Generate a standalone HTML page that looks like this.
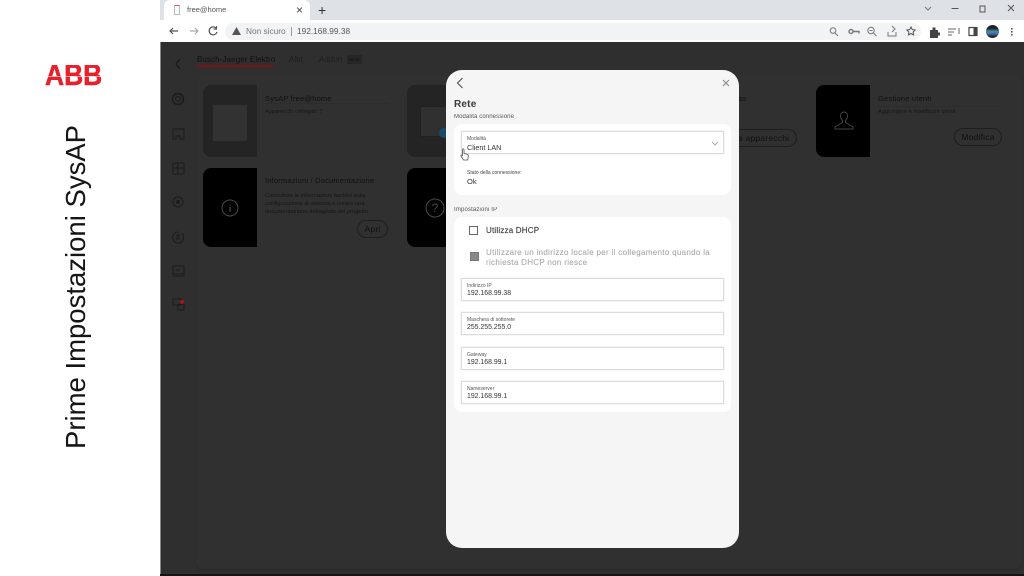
<!DOCTYPE html>
<html><head><meta charset="utf-8"><style>
html,body{margin:0;padding:0;width:1024px;height:576px;overflow:hidden;background:#fff;font-family:"Liberation Sans",sans-serif}
div,span{position:absolute;white-space:nowrap}
svg{position:absolute;overflow:visible}
.b{filter:blur(.35px)}
.img{border-radius:8px 0 0 8px;background:#000;width:54px}
.btn{border:1px solid #1e1e1e;border-radius:9px;height:16px;line-height:16px;text-align:center;font-size:8.5px;color:#101010;letter-spacing:.2px}
.f{left:461px;width:261px;height:21px;background:#fff;border:1px solid #dcdcdc;box-shadow:0 0 1px #ccc}
.l{left:5px;top:4px;font-size:5px;color:#555}
.v{left:5px;top:11px;font-size:6.900px;color:#333}
</style></head><body>
<div style="left:0;top:0;width:160px;height:576px;background:#fff"></div>
<div style="left:45px;top:65px;width:58px;height:22px;overflow:hidden">
<span style="left:0;top:-4px;font-size:30px;line-height:30px;font-weight:bold;color:#e8202c;-webkit-text-stroke:.5px #e8202c;transform:scaleX(.88);transform-origin:left">ABB</span>
<span style="left:0;top:11px;width:58px;height:1px;background:#ffffff;opacity:.55"></span>
</div>
<div style="left:76px;top:287px;width:0;height:0">
<span style="left:-200px;top:-17px;width:400px;text-align:center;font-size:27.5px;line-height:34px;color:#151515;transform:rotate(-90deg);transform-origin:center">Prime Impostazioni SysAP</span>
</div>
<!-- chrome -->
<div style="left:160px;top:0;width:864px;height:20px;background:#dee1e6"></div>
<div style="left:164px;top:0;width:146px;height:20px;background:#fff;border-radius:6px 6px 0 0"></div>
<div class="b" style="left:187px;top:5px;font-size:7.5px;color:#555">free@home</div>
<div style="left:174px;top:5px;width:4px;height:8px;border:1px solid #bbb;border-top-color:#d55"></div>
<div class="b" style="left:296px;top:3px;font-size:12px;color:#444">×</div>
<div class="b" style="left:318px;top:2px;font-size:14px;color:#333">+</div>
<svg width="60" height="20" style="left:920px;top:0" fill="none" stroke="#777"><path d="M5 7l3 3 3-3"/></svg>
<svg width="100" height="20" style="left:950px;top:0" fill="none" stroke="#555"><path d="M1.500 8.500h7"/><rect x="30" y="6" width="5" height="6"/><path d="M58 5l6 6m0-6l-6 6"/></svg>
<div style="left:160px;top:20px;width:864px;height:22px;background:#fff"></div>
<div style="left:225px;top:23px;width:696px;height:17px;border-radius:9px;background:#f1f3f4"></div>
<svg width="60" height="16" style="left:168px;top:24px" fill="none" stroke="#555" stroke-width="1.200"><path d="M10 7H2m3-3L2 7l3 3"/><path d="M22 7h8m-3-3l3 3-3 3" stroke="#aaa"/><path d="M48 4a4 4 0 1 0 1 4M48.500 2v3h-3"/></svg>
<svg width="10" height="9" style="left:232px;top:27px"><path d="M4.500 0L9 8H0z" fill="#555"/></svg>
<div class="b" style="left:246px;top:26px;font-size:8.3px;color:#777">Non sicuro</div>
<div style="left:291px;top:27px;width:1px;height:9px;background:#999"></div>
<div class="b" style="left:297px;top:26px;font-size:8.3px;color:#555">192.168.99.38</div>
<svg width="170" height="16" style="left:826px;top:24px" fill="none" stroke="#777" stroke-width="1"><circle cx="7" cy="6.500" r="2.800"/><path d="M9 9l3 3"/><circle cx="25" cy="7.500" r="2" stroke-width="1.400"/><path d="M27 7.500h6v2" stroke-width="1.400"/><circle cx="45" cy="6.500" r="3.200"/><path d="M47.500 9l3 3M43.500 6.500h3"/><path d="M62 8v4h8V8M66 8l3-3-3-3"/><path d="M85 3l1.300 2.600 2.900.4-2.100 2 .5 2.900-2.600-1.400-2.600 1.400.5-2.900-2.100-2 2.900-.4z" stroke="#555"/></svg>
<svg width="100" height="16" style="left:928px;top:24px"><path d="M2 6h2.500V3.500h3V6H10v2.500H12v3H10V14H2z" fill="#444"/><path d="M20 5h8M20 8h6M20 11h4M31 4v6" stroke="#666" fill="none"/><rect x="41" y="3.500" width="8" height="8" fill="none" stroke="#444" stroke-width="1.200"/><rect x="45.500" y="3.500" width="4" height="8" fill="#444"/><rect x="83" y="4" width="1.600" height="1.600" fill="#555"/><rect x="83" y="7" width="1.600" height="1.600" fill="#555"/><rect x="83" y="10" width="1.600" height="1.600" fill="#555"/></svg>
<div class="b" style="left:986px;top:25px;width:13px;height:13px;border-radius:50%;background:linear-gradient(#222 25%,#3f8fa8 50%,#4a6fb0 65%,#222 90%)"></div>
<!-- app -->
<div style="left:160px;top:42px;width:864px;height:534px;background:#2f2f2f"></div>
<div style="left:160px;top:42px;width:1px;height:534px;background:#888"></div>
<div style="left:160px;top:574px;width:864px;height:2px;background:#141414"></div>
<div style="left:196px;top:75px;width:826px;height:494px;background:#303030;border-radius:6px;box-shadow:0 1px 1px #282828"></div>
<svg class="b" width="10" height="12" style="left:174px;top:58px" fill="none" stroke="#181818" stroke-width="1.200"><path d="M6 1L2 6l4 5"/></svg>
<div class="b" style="left:197px;top:55px;font-size:8px;color:#101010;letter-spacing:.1px">Busch-Jaeger Elektro</div>
<div style="left:197px;top:65px;width:76px;height:1.500px;background:#7a1414"></div>
<div class="b" style="left:289px;top:55px;font-size:8px;color:#1e1e1e">Altri</div>
<div class="b" style="left:319px;top:55px;font-size:8px;color:#1e1e1e">Addon</div>
<div class="b" style="left:347px;top:55px;width:15px;height:9px;background:#262626;font-size:4px;line-height:9px;text-align:center;color:#0c0c0c">BETA</div>
<svg class="b" width="20" height="230" style="left:169px;top:90px" fill="none" stroke="#1b1b1b" stroke-width="1"><circle cx="9" cy="9" r="5.500" stroke-width="1.500"/><circle cx="9" cy="9" r="2.500"/><path d="M4 39h11v10h-4v-3H7v3H4z"/><path d="M4 73h11v11H4zM4 78h11M9 73v11"/><circle cx="9" cy="112" r="5"/><circle cx="9" cy="112" r="1.500" fill="#1b1b1b"/><path d="M9 142a5.500 5.500 0 1 0 4 1.500M8 145h2v4H8z"/><path d="M4 176h11v8H4zM3 186h13M7 180h4"/><path d="M4 209h8v6H4zM9 214h6v6H9z"/></svg>
<div style="left:180px;top:300px;width:4px;height:4px;border-radius:50%;background:#a01818"></div>
<!-- cards -->
<div class="img b" style="left:203px;top:85px;height:72px;background:#242424"></div>
<div class="b" style="left:213px;top:105px;width:34px;height:36px;background:#323232"></div>
<div class="b" style="left:265px;top:94px;font-size:7.500px;color:#101010;letter-spacing:.2px">SysAP free@home</div>
<div style="left:264px;top:103px;width:125px;height:1px;background:#2c2c2c"></div>
<div class="b" style="left:265px;top:109px;font-size:5.500px;color:#161616;letter-spacing:.1px">Apparecchi collegati: 7</div>
<div class="img b" style="left:407px;top:85px;height:72px;background:#242424"></div>
<div class="b" style="left:420px;top:106px;width:27px;height:29px;background:#303030;border:1px solid #202020"></div>
<div style="left:439px;top:128px;width:10px;height:10px;border-radius:50%;background:#174a68"></div>
<div class="img" style="left:203px;top:168px;height:79px"></div>
<svg width="20" height="20" style="left:220px;top:198px" fill="none" stroke="#4a4a4a" stroke-width="1"><circle cx="10" cy="10" r="8"/><path d="M10 6.500v1M10 9v5" stroke-width="1.200"/></svg>
<div class="b" style="left:265px;top:176px;font-size:7.500px;color:#101010;letter-spacing:.2px">Informazioni / Documentazione</div>
<div class="b" style="left:265px;top:192px;font-size:5.800px;line-height:8px;color:#161616;white-space:pre">Consultare le informazioni backlet sulla
configurazione di sistema e creare una
documentazione dettagliata del progetto</div>
<div class="btn b" style="left:357px;top:220px;width:29px">Apri</div>
<div class="img" style="left:407px;top:168px;height:79px"></div>
<svg width="22" height="22" style="left:424px;top:197px" fill="none" stroke="#4a4a4a" stroke-width="1"><circle cx="11" cy="11" r="9"/><text x="11" y="15" font-size="12" text-anchor="middle" fill="#4a4a4a" stroke="none" font-family="Liberation Sans">?</text></svg>
<div class="b" style="left:739px;top:94px;font-size:7.500px;color:#101010">ss</div>
<div class="btn b" style="left:722px;top:129px;width:74px;border-left:0;border-radius:0 9px 9px 0">eva apparecchi</div>
<div class="img" style="left:816px;top:85px;height:72px"></div>
<svg width="20" height="22" style="left:834px;top:111px" fill="none" stroke="#444" stroke-width="1"><path d="M10 1c-2.500 0-3.500 2-3.500 4s1 3.500 2 4.500v2L1 16v2h18v-2l-7.500-4.500v-2c1-1 2-2.500 2-4.500S12.500 1 10 1z"/></svg>
<div class="b" style="left:878px;top:94px;font-size:7.500px;color:#101010;letter-spacing:.2px">Gestione utenti</div>
<div style="left:877px;top:106px;width:122px;height:1px;background:#2c2c2c"></div>
<div class="b" style="left:878px;top:109px;font-size:5.500px;color:#161616;letter-spacing:.1px">Aggiungere e modificare utenti</div>
<div class="btn b" style="left:954px;top:128px;width:46px">Modifica</div>
<!-- modal -->
<div style="left:446px;top:70px;width:293px;height:478px;background:#f5f5f5;border-radius:16px"></div>
<svg width="8" height="12" style="left:456px;top:77px" fill="none" stroke="#555" stroke-width="1.200"><path d="M6.500 1L1.500 6l5 5"/></svg>
<svg width="8" height="8" style="left:722px;top:79px" fill="none" stroke="#888" stroke-width="1.100"><path d="M1 1l6 6m0-6L1 7"/></svg>
<div class="b" style="left:454px;top:98.500px;font-size:10px;font-weight:bold;color:#3a3a3a;letter-spacing:.2px">Rete</div>
<div class="b" style="left:454px;top:114px;font-size:6px;color:#555;letter-spacing:.1px">Modalità connessione</div>
<div style="left:454px;top:124px;width:277px;height:71px;background:#fff;border-radius:8px"></div>
<div class="f" style="top:131px"><span class="l">Modalità</span><span class="v" style="font-size:7.200px">Client LAN</span></div>
<svg width="8" height="5" style="left:711px;top:141px" fill="none" stroke="#aaa"><path d="M1 1l3 3 3-3"/></svg>
<svg width="10" height="14" style="left:460px;top:148px"><path d="M2.500 1.500c0-1 1.500-1 1.500 0v4l3 .7c1 .3 1.500.8 1.300 2L7.700 12H3.500L1 8c-.5-1 .7-1.500 1.500-.5z" fill="#fff" stroke="#555" stroke-width=".8"/></svg>
<div class="b" style="left:467px;top:170px;font-size:5px;color:#444">Stato della connessione:</div>
<div class="b" style="left:467px;top:177px;font-size:7.500px;color:#333">Ok</div>
<div class="b" style="left:454px;top:207px;font-size:6px;color:#555;letter-spacing:.15px">Impostazioni IP</div>
<div style="left:454px;top:217px;width:277px;height:195px;background:#fff;border-radius:8px"></div>
<div style="left:469px;top:226px;width:7px;height:7px;border:1px solid #666"></div>
<div class="b" style="left:486px;top:226px;font-size:8px;color:#444;letter-spacing:.2px;-webkit-text-stroke:.15px #444">Utilizza DHCP</div>
<div class="b" style="left:469.500px;top:252px;width:7px;height:7px;background:#888;border:.5px solid #777"></div>
<div class="b" style="left:486px;top:248px;font-size:8px;line-height:10px;color:#a9a9a9;letter-spacing:.31px;-webkit-text-stroke:.1px #a9a9a9;white-space:pre">Utilizzare un indirizzo locale per il collegamento quando la
richiesta DHCP non riesce</div>
<div class="f" style="top:278px"><span class="l">Indirizzo IP</span><span class="v">192.168.99.38</span></div>
<div class="f" style="top:312px"><span class="l">Maschera di sottorete</span><span class="v">255.255.255.0</span></div>
<div class="f" style="top:347px"><span class="l">Gateway</span><span class="v">192.168.99.1</span></div>
<div class="f" style="top:381px"><span class="l">Nameserver</span><span class="v">192.168.99.1</span></div>
</body></html>
